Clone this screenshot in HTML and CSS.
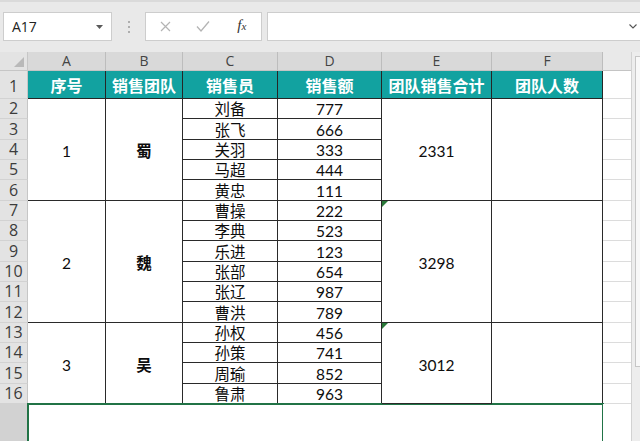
FILE: index.html
```html
<!DOCTYPE html>
<html lang="zh-CN">
<head>
<meta charset="utf-8">
<title>销售表</title>
<link rel="stylesheet" href="styles.css">
</head>
<body>
<div class="app">
  <div class="toolbar">
    <div class="namebox">
      <span class="ref">A17</span>
      <svg class="caret" width="7" height="4" viewBox="0 0 7 4"><path d="M0 0h7L3.5 4z" fill="#5a5a5a"/></svg>
    </div>
    <div class="dots"><i></i><i></i><i></i></div>
    <div class="fbtns">
      <span class="fb"><svg width="11" height="11" viewBox="0 0 11 11"><path d="M1 1l9 9M10 1l-9 9" stroke="#b4b4b4" stroke-width="1.2" fill="none"/></svg></span>
      <span class="fb"><svg width="14" height="11" viewBox="0 0 14 11"><path d="M1 5.5l4 4.5 8-9.5" stroke="#b4b4b4" stroke-width="1.3" fill="none"/></svg></span>
      <span class="fb fx"><i>f</i><sub>x</sub></span>
    </div>
    <div class="finput">
      <svg class="chev" width="8" height="5" viewBox="0 0 8 5"><path d="M0.5 0.5l3.5 3.5 3.5-3.5" stroke="#555" stroke-width="1.1" fill="none"/></svg>
    </div>
  </div>

  <div class="sheet">
    <div class="corner"><span class="tri"></span></div>
    <div class="ch">A</div><div class="ch">B</div><div class="ch">C</div><div class="ch">D</div><div class="ch">E</div><div class="ch">F</div>
    <div class="ch ch-g"></div>
    <div class="vscroll"><div class="vthumb"></div></div>

    <div class="rh rh1">1</div>
    <div class="hd">序号</div><div class="hd">销售团队</div><div class="hd">销售员</div><div class="hd">销售额</div><div class="hd">团队销售合计</div><div class="hd">团队人数</div>
    <div class="g"></div>

    <div class="rh">2</div>
    <div class="c mc m5">1</div><div class="c mc m5 b">蜀</div><div class="c">刘备</div><div class="c">777</div><div class="c mc m5">2331</div><div class="c mc m5"></div>
    <div class="g"></div>
    <div class="rh">3</div><div class="c">张飞</div><div class="c">666</div><div class="g"></div>
    <div class="rh">4</div><div class="c">关羽</div><div class="c">333</div><div class="g"></div>
    <div class="rh">5</div><div class="c">马超</div><div class="c">444</div><div class="g"></div>
    <div class="rh">6</div><div class="c">黄忠</div><div class="c">111</div><div class="g"></div>

    <div class="rh">7</div>
    <div class="c mc m6">2</div><div class="c mc m6 b">魏</div><div class="c">曹操</div><div class="c">222</div><div class="c mc m6 flag">3298</div><div class="c mc m6"></div>
    <div class="g"></div>
    <div class="rh">8</div><div class="c">李典</div><div class="c">523</div><div class="g"></div>
    <div class="rh">9</div><div class="c">乐进</div><div class="c">123</div><div class="g"></div>
    <div class="rh">10</div><div class="c">张部</div><div class="c">654</div><div class="g"></div>
    <div class="rh">11</div><div class="c">张辽</div><div class="c">987</div><div class="g"></div>
    <div class="rh">12</div><div class="c">曹洪</div><div class="c">789</div><div class="g"></div>

    <div class="rh">13</div>
    <div class="c mc m4">3</div><div class="c mc m4 b">吴</div><div class="c">孙权</div><div class="c">456</div><div class="c mc m4 flag">3012</div><div class="c mc m4"></div>
    <div class="g"></div>
    <div class="rh">14</div><div class="c">孙策</div><div class="c">741</div><div class="g"></div>
    <div class="rh">15</div><div class="c">周瑜</div><div class="c">852</div><div class="g"></div>
    <div class="rh">16</div><div class="c">鲁肃</div><div class="c">963</div><div class="g"></div>

    <div class="rh rh-sel"></div>
    <div class="sel"></div>
    <div class="g g-last"></div>
  </div>
</div>
</body>
</html>
```

FILE: styles.css
```css
html, body {
  margin: 0;
  padding: 0;
  background: #ffffff;
  overflow: hidden;
}

.app {
  width: 640px;
  height: 441px;
  overflow: hidden;
  font-family: "Lato", "Noto Sans CJK SC", sans-serif;
  color: #111;
}

/* ---------- formula bar ---------- */
.toolbar {
  height: 52px;
  box-sizing: border-box;
  background: #e9e9e9;
  border-top: 2px solid #dadada;
  padding: 10px 0 0 3px;
  display: flex;
  align-items: flex-start;
}

.namebox {
  width: 109px;
  height: 29px;
  box-sizing: border-box;
  background: #fff;
  border: 1px solid #cdcdcd;
  display: flex;
  align-items: center;
  justify-content: space-between;
  padding: 0 8px 0 8px;
}

.ref {
  font-family: "Open Sans", "Noto Sans", sans-serif;
  font-size: 14px;
  color: #222;
}

.dots {
  width: 33px;
  height: 29px;
  display: flex;
  flex-direction: column;
  align-items: center;
  justify-content: center;
  gap: 3px;
}

.dots i {
  width: 2px;
  height: 2px;
  background: #9a9a9a;
  border-radius: 50%;
}

.fbtns {
  width: 117px;
  height: 29px;
  box-sizing: border-box;
  background: #fff;
  border: 1px solid #cdcdcd;
  display: flex;
}

.fb {
  flex: 1;
  display: flex;
  align-items: center;
  justify-content: center;
}

.fx {
  font-family: "Liberation Serif", serif;
  font-style: italic;
  font-size: 15px;
  color: #333;
  padding-bottom: 2px;
}

.fx sub {
  font-size: 11px;
  vertical-align: -1px;
}

.finput {
  flex: 1;
  height: 29px;
  margin-left: 5px;
  margin-right: -3px;
  box-sizing: border-box;
  background: #fff;
  border: 1px solid #cdcdcd;
  display: flex;
  align-items: center;
  justify-content: flex-end;
  padding-right: 5px;
}

/* ---------- sheet grid ---------- */
.sheet {
  display: grid;
  grid-template-columns: 28px 78px 77px 95px 104px 110px 111px 28px 9px;
  grid-template-rows: 19px 28px 20px 21px 20px 20px 21px 20px 20px 21px 20px 20px 21px 20px 20px 21px 20px 1fr;
  height: 389px;
}

.corner {
  background: #e3e3e3;
  border-right: 1px solid #c6c6c6;
  border-bottom: 1px solid #c6c6c6;
  box-sizing: border-box;
  display: flex;
  align-items: flex-end;
  justify-content: flex-end;
  padding: 0 3px 3px 0;
}

.tri {
  width: 0;
  height: 0;
  border-left: 10px solid transparent;
  border-bottom: 10px solid #b9b9b9;
}

.ch {
  background: #d9d9d9;
  border-right: 1px solid #bdbdbd;
  border-bottom: 1px solid #c4c4c4;
  box-sizing: border-box;
  display: flex;
  align-items: center;
  justify-content: center;
  font-family: "Open Sans", "Noto Sans", sans-serif;
  font-size: 14px;
  color: #444;
  line-height: 1;
}

.ch-g {
  background: #e9e9e9;
  border-right: none;
}

.vscroll {
  grid-column: 9;
  grid-row: 1 / -1;
  background: #ededed;
  border-left: 1px solid #d2d2d2;
  box-sizing: border-box;
  padding: 4px 0 0 3px;
}

.vthumb {
  height: 311px;
  background: #f8f8f8;
  border: 1px solid #c6c6c6;
  border-right: none;
  box-sizing: border-box;
}

.rh {
  background: #e3e3e3;
  border-right: 1px solid #c6c6c6;
  border-bottom: 1px solid #d2d2d2;
  box-sizing: border-box;
  display: flex;
  align-items: flex-end;
  justify-content: center;
  font-family: "Open Sans", "Noto Sans", sans-serif;
  font-size: 16px;
  line-height: 19px;
  color: #3c3c3c;
}

.rh1 {
  padding-bottom: 2px;
}

.rh-sel {
  background: #d2d2d2;
  border-bottom: none;
}

.hd {
  background: #12a2a0;
  color: #fff;
  font-weight: 700;
  font-size: 16px;
  line-height: 20px;
  border-right: 1px solid #262626;
  border-bottom: 1px solid #262626;
  box-sizing: border-box;
  display: flex;
  align-items: flex-end;
  justify-content: center;
  padding-bottom: 2px;
}

.c {
  background: #fff;
  border-right: 1px solid #2a2a2a;
  border-bottom: 1px solid #2a2a2a;
  box-sizing: border-box;
  display: flex;
  align-items: flex-end;
  justify-content: center;
  font-size: 15.5px;
  line-height: 18px;
  color: #0d0d0d;
}

.mc {
  align-items: center;
  padding-top: 3px;
}

.m4 { grid-row: span 4; }
.m5 { grid-row: span 5; }
.m6 { grid-row: span 6; }

.b {
  font-weight: 700;
}

.flag {
  position: relative;
}

.flag::before {
  content: "";
  position: absolute;
  left: 0;
  top: 0;
  width: 0;
  height: 0;
  border-top: 6px solid #2a7a3a;
  border-right: 6px solid transparent;
}

.g {
  background: #fff;
  border-bottom: 1px solid #dcdcdc;
  box-sizing: border-box;
}

.g-last {
  border-bottom: none;
}

.sel {
  grid-column: span 6;
  background: #fff;
  border: 2px solid #217346;
  border-bottom: none;
  margin: -1px -1px 0 -1px;
}
```
